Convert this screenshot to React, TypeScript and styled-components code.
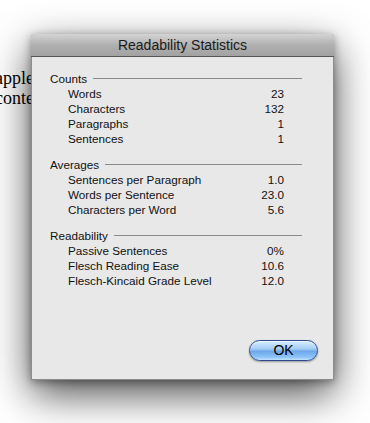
import React from 'react';
import styled, { createGlobalStyle } from 'styled-components';

const GlobalStyle = createGlobalStyle`
  html, body {
    margin: 0;
    padding: 0;
    background: #ffffff;
  }
  body {
    width: 370px;
    height: 423px;
    overflow: hidden;
  }
`;

const Page = styled.div`
  position: relative;
  width: 370px;
  height: 423px;
  overflow: hidden;
  background: #ffffff;
`;

const DocText = styled.div`
  padding: 68px 0 0 0;
  margin-left: -5px;
  font-family: "Liberation Serif", "DejaVu Serif", serif;
  font-size: 18px;
  line-height: 20px;
  color: #000;
`;

const Sheet = styled.div`
  position: absolute;
  left: 31px;
  top: 34px;
  width: 303px;
  height: 346px;
  display: flex;
  flex-direction: column;
  background: #e8e8e8;
  border: 1px solid #8c8c8c;
  border-top: none;
  box-sizing: border-box;
  border-radius: 4px 4px 0 0;
  box-shadow: 0 14px 40px rgba(0, 0, 0, 0.7), 0 2px 8px rgba(0, 0, 0, 0.35);
`;

const TitleBar = styled.div`
  height: 23px;
  flex: none;
  display: flex;
  align-items: center;
  justify-content: center;
  border-radius: 4px 4px 0 0;
  background: linear-gradient(#d4d4d4, #b0b0b0 50%, #a2a2a2);
  border-bottom: 1px solid #565656;
  box-sizing: border-box;
  font-family: "Liberation Sans", Arial, sans-serif;
  font-size: 14px;
  color: #1a1a1a;
  margin: 0 -1px;
`;

const Body = styled.div`
  flex: 1;
  display: flex;
  flex-direction: column;
  padding: 14px 31px 0 18px;
  font-family: "Liberation Sans", Arial, sans-serif;
  font-size: 11.7px;
  color: #111;
`;

const Section = styled.div`
  margin-bottom: 11px;
`;

const Header = styled.div`
  display: flex;
  align-items: center;
  height: 15px;
  &::after {
    content: '';
    flex: 1;
    height: 1px;
    background: #8a8a8a;
    margin-left: 6px;
  }
`;

const Row = styled.div`
  display: flex;
  justify-content: space-between;
  height: 15px;
  line-height: 15px;
  padding: 0 18px 0 18px;
`;

const Footer = styled.div`
  margin-top: auto;
  display: flex;
  justify-content: flex-end;
  padding: 0 15px 18px 0;
`;

const AquaButton = styled.button`
  width: 69px;
  height: 21px;
  border-radius: 11px;
  border: 1px solid #2c4a8e;
  background: linear-gradient(#d8ecff 0%, #a6cff6 40%, #6fa8ea 55%, #8cc4fa 85%, #c3e4ff 100%);
  box-shadow: 0 1px 2px rgba(0, 0, 0, 0.35), inset 0 1px 1px rgba(255, 255, 255, 0.6);
  font-family: "Liberation Sans", Arial, sans-serif;
  font-size: 14px;
  color: #000;
  padding: 0;
  line-height: 19px;
`;

const sections = [
  {
    title: 'Counts',
    rows: [
      ['Words', '23'],
      ['Characters', '132'],
      ['Paragraphs', '1'],
      ['Sentences', '1'],
    ],
  },
  {
    title: 'Averages',
    rows: [
      ['Sentences per Paragraph', '1.0'],
      ['Words per Sentence', '23.0'],
      ['Characters per Word', '5.6'],
    ],
  },
  {
    title: 'Readability',
    rows: [
      ['Passive Sentences', '0%'],
      ['Flesch Reading Ease', '10.6'],
      ['Flesch-Kincaid Grade Level', '12.0'],
    ],
  },
];

export default function App() {
  return (
    <Page>
      <GlobalStyle />
      <DocText>
        apple
        <br />
        conte
      </DocText>
      <Sheet>
        <TitleBar>Readability Statistics</TitleBar>
        <Body>
          {sections.map((s) => (
            <Section key={s.title}>
              <Header>{s.title}</Header>
              {s.rows.map(([label, value]) => (
                <Row key={label}>
                  <span>{label}</span>
                  <span>{value}</span>
                </Row>
              ))}
            </Section>
          ))}
        </Body>
        <Footer>
          <AquaButton>OK</AquaButton>
        </Footer>
      </Sheet>
    </Page>
  );
}
